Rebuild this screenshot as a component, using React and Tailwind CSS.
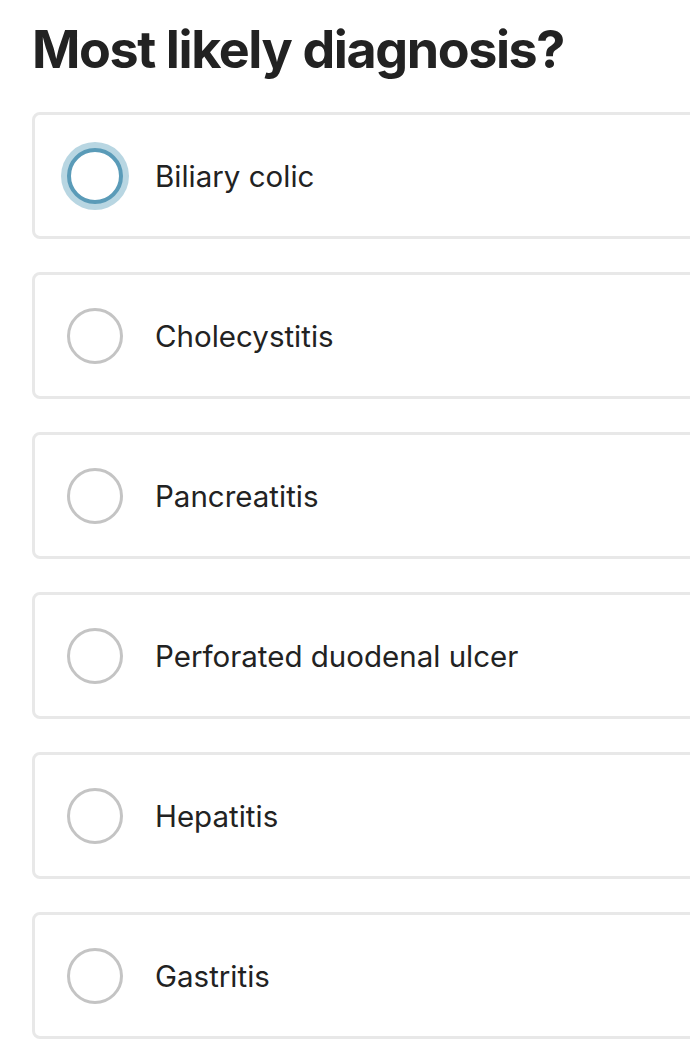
import React from "react";

const options = [
  "Biliary colic",
  "Cholecystitis",
  "Pancreatitis",
  "Perforated duodenal ulcer",
  "Hepatitis",
  "Gastritis",
];

export default function App() {
  return (
    <div
      className="w-[690px] h-[1054px] overflow-hidden bg-white text-[#222222]"
      style={{ fontFamily: "Inter, 'Noto Sans', sans-serif" }}
    >
      <h1 className="pl-[32px] pt-[18px] text-[52px] leading-[64px] font-bold tracking-[-1.4px] text-[#222222]">
        Most likely diagnosis?
      </h1>
      <div className="flex flex-col gap-[33px] pl-[32px] pt-[30px]">
        {options.map((o, i) => (
          <div
            key={o}
            className="flex items-center w-[700px] h-[127px] shrink-0 rounded-[8px] border-[3px] border-[#e8e8e8] bg-white"
          >
            <div className="w-[120px] flex items-center justify-center">
              {i === 0 ? (
                <div className="w-[68px] h-[68px] rounded-full bg-[#b8d6e2] flex items-center justify-center">
                  <div className="w-[56px] h-[56px] rounded-full border-[4px] border-[#5a9bb8] bg-white" />
                </div>
              ) : (
                <div className="w-[56px] h-[56px] rounded-full border-[3px] border-[#c4c4c4] bg-white" />
              )}
            </div>
            <span className="text-[29.5px] leading-[36px] text-[#222222]">{o}</span>
          </div>
        ))}
      </div>
    </div>
  );
}
